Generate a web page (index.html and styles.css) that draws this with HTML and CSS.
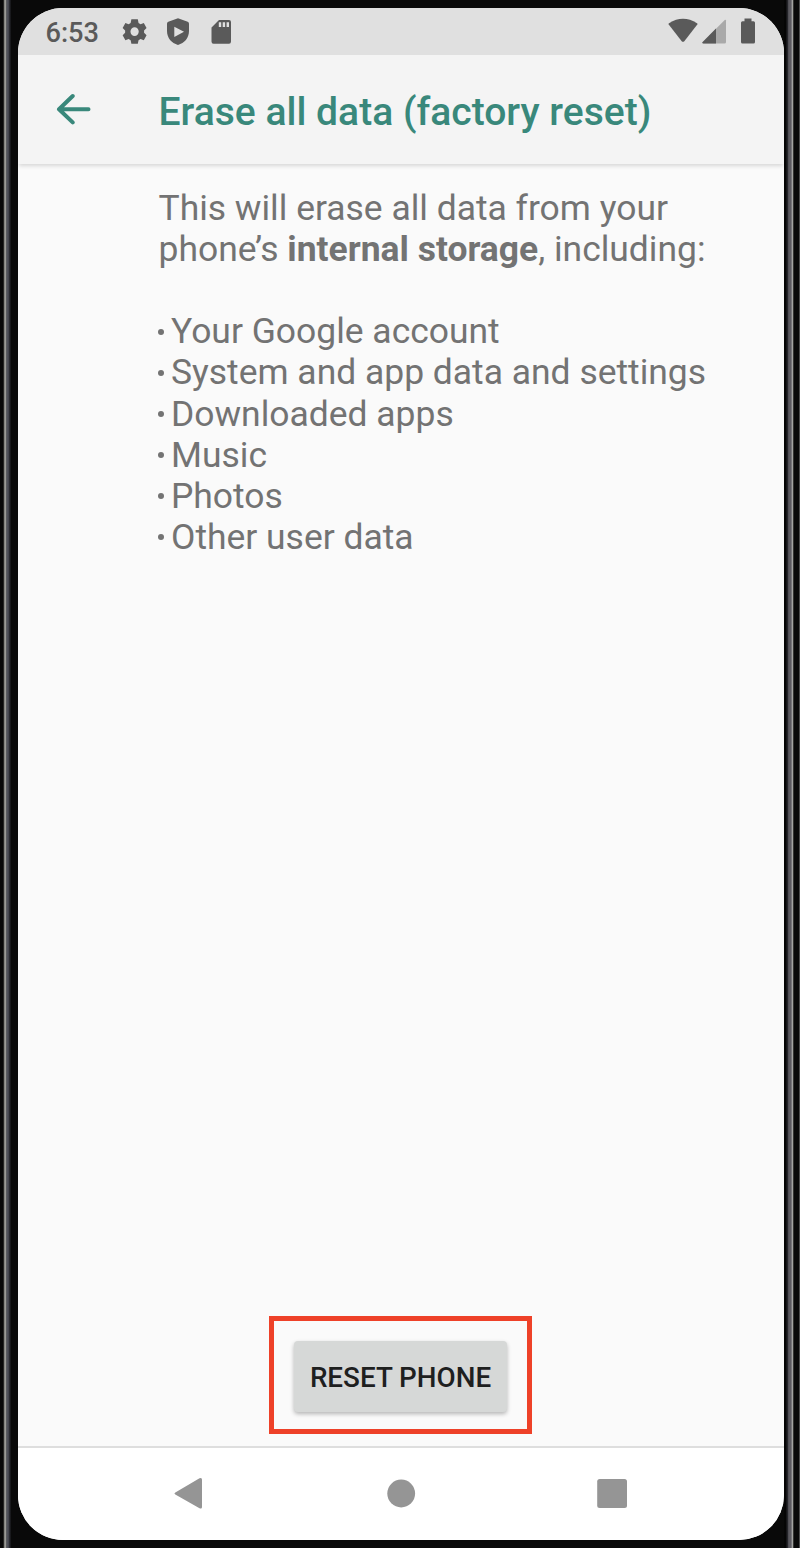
FILE: index.html
```html
<!DOCTYPE html>
<html lang="en">
<head>
<meta charset="utf-8">
<title>Erase all data (factory reset)</title>
<link rel="stylesheet" href="styles.css">
</head>
<body>
<div class="phone">
  <div class="rail rail-left"></div>
  <main class="screen">
    <div class="status">
      <span class="time">6:53</span>
      <svg class="status-left" width="120" height="47" viewBox="0 0 120 47">
        <path fill-rule="evenodd" transform="translate(16.600 23.600) scale(.92 .98) translate(-16.500 -23.500)" d="M13 11h7l.8 3.600 2.200 1.300 3.500-1.200 3 5.100-2.700 2.500v2.400l2.700 2.500-3 5.100-3.500-1.200-2.200 1.300-.8 3.600h-7l-.8-3.600-2.200-1.300-3.500 1.200-3-5.100 2.700-2.500v-2.400l-2.700-2.500 3-5.100 3.500 1.200 2.200-1.300zM16.500 19a4.500 4.500 0 1 0 0 9 4.500 4.500 0 0 0 0-9z"/>
        <path fill-rule="evenodd" d="M60 10.200l9.700 3.600q1.300.6 1.300 2v7.200c0 7-4.500 12-11 14-6.500-2-11-7-11-14v-7.200q0-1.400 1.300-2zM56.300 18.700v10.200l9.700-5.100z"/>
        <path fill-rule="evenodd" d="M101 12h10q2 0 2 2v19.500q0 2.200-2 2.200H95.500q-2 0-2-2.200v-14zM100.800 14.300v4.700h2.400v-4.700zm3.900 0v4.700h2.400v-4.700zm3.900 0v4.700h2.400v-4.700z"/>
      </svg>
      <svg class="status-right" width="90" height="47" viewBox="0 0 90 47">
        <path d="M.7 16.500Q.2 15.700 1 15.200Q15 6.500 29 15.200Q29.800 15.700 29.300 16.500L16.300 33.200Q15 34.500 13.700 33.200Z"/>
        <path d="M57 11.700q1-.2 1 .8V34q0 1.500-1.500 1.500H35.500q-2-.2-.8-1.500z" fill="#a9a9a9"/>
        <path d="M48 20.500v15H35.500q-2-.2-.8-1.500z"/>
        <path d="M76.500 10.500h7v2.700h2q1.500 0 1.500 1.500V34q0 1.500-1.500 1.500h-11Q73 35.500 73 34V14.700q0-1.500 1.500-1.500h2z"/>
      </svg>
    </div>
    <header class="appbar">
      <svg class="back" width="36" height="32" viewBox="0 0 36 32">
        <path d="M16.700 3L3 16.300l13.700 13.100M3.500 16.200H32.500"/>
      </svg>
      <h1 class="title">Erase all data (factory reset)</h1>
    </header>
    <section class="content">
      <p class="intro">This will erase all data from your<br>phone’s <b>internal storage</b>, including:</p>
      <ul class="items">
        <li>Your Google account</li>
        <li>System and app data and settings</li>
        <li>Downloaded apps</li>
        <li>Music</li>
        <li>Photos</li>
        <li>Other user data</li>
      </ul>
    </section>
    <div class="highlight"><button class="reset">RESET PHONE</button></div>
    <nav class="navbar">
      <svg width="766" height="91" viewBox="0 0 766 91">
        <g transform="translate(0 .7)">
          <path d="M157.300 43.800L181.500 29.600Q184 28.500 184 31V58.200Q184 60.700 181.500 59.500L157.300 45.800Q155.500 44.800 157.300 43.800Z"/>
          <circle cx="383.200" cy="44.800" r="13.900"/>
          <rect x="579.200" y="30.300" width="29.800" height="29" rx="2.500"/>
        </g>
      </svg>
    </nav>
  </main>
  <div class="rail rail-right"></div>
</div>
</body>
</html>
```
FILE: styles.css
```css
* { box-sizing: border-box; }
body { margin: 0; font-family: Roboto, "Liberation Sans", sans-serif; }
.phone {
  display: flex;
  align-items: stretch;
  width: 800px;
  height: 1548px;
  background: #090909;
}
.rail { flex: none; }
.rail-left {
  width: 18px;
  background: linear-gradient(90deg, #080808 3px, #262624 3px 4px, #83837f 4px 5px, #9a9a96 5px 6px, #5c5d60 6px 7px, #50525a 7px 8px, #45464e 8px 9px, #292a30 9px 10px, #090909 11px);
}
.rail-right {
  width: 16px;
  background: linear-gradient(90deg, #050505 2px, #25252a 3px 4px, #515056 4px 5px, #5c5a60 5px 7px, #77767a 7px 8px, #a3a3a0 8px 9px, #353533 9px 10px, #090909 10px 15px, #4a4a4a 15px);
}
.screen {
  display: flex;
  flex-direction: column;
  width: 766px;
  height: 1532px;
  margin-top: 8px;
  overflow: hidden;
  border-radius: 45px;
  background: #fafafa;
}
.status {
  display: flex;
  flex: none;
  height: 47px;
  padding-left: 28px;
  background: #e0e0e0;
  color: #5a5a5a;
}
.time {
  width: 72px;
  margin-left: -.5px;
  margin-right: .5px;
  font-size: 27.200px;
  font-weight: 500;
  line-height: 51px;
  white-space: nowrap;
}
.status svg { fill: #5a5a5a; }
.status-right { margin-left: 430px; }
.appbar {
  display: flex;
  flex: none;
  height: 109px;
  padding-left: 38px;
  background: #f4f4f4;
  box-shadow: 0 3px 4px -1px rgba(0, 0, 0, .14);
}
.back {
  margin-top: 38px;
  fill: none;
  stroke: #39887b;
  stroke-width: 4;
  stroke-linecap: round;
  stroke-linejoin: round;
}
.title {
  margin: 0 0 0 66.500px;
  color: #39887b;
  font-size: 39.050px;
  font-weight: 500;
  line-height: 115px;
  white-space: nowrap;
}
.content {
  flex: 1;
  padding: 24px 0 0 140.500px;
  color: #737373;
  font-size: 35.450px;
  line-height: 41.100px;
  white-space: nowrap;
}
.intro { margin: 0 0 41.200px; }
.items { margin: 0; padding: 0; list-style: none; }
.items li { display: flex; align-items: center; }
.items li::before {
  content: "";
  width: 6px;
  height: 6px;
  margin: 0 7.500px 0 -1px;
  border-radius: 50%;
  background: #737373;
}
.highlight {
  align-self: center;
  display: flex;
  align-items: center;
  justify-content: center;
  flex: none;
  width: 263px;
  height: 118px;
  margin: 0 1px 12px 0;
  border: 5px solid #ee4128;
}
.reset {
  width: 213px;
  height: 71px;
  margin-top: 3px;
  padding: 2px 0 0;
  border: 0;
  border-radius: 4px;
  background: #d6d8d7;
  box-shadow: 0 2px 4px rgba(0, 0, 0, .28);
  color: #1e201f;
  font: 500 27.800px/70px Roboto, sans-serif;
  white-space: nowrap;
}
.navbar {
  flex: none;
  height: 94px;
  border-top: 2px solid #dedede;
  background: #fff;
}
.navbar svg { display: block; fill: #959595; }
```
